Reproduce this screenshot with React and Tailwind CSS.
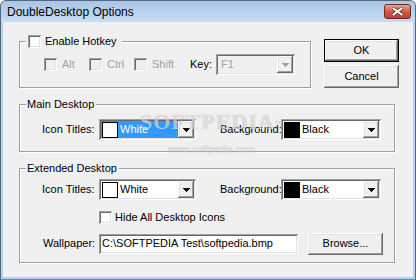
import React from "react";

const sunken =
  "shadow-[inset_1px_1px_0_#a0a0a0,inset_-1px_-1px_0_#fff,inset_2px_2px_0_#696969,inset_-2px_-2px_0_#e3e3e3]";
const raised =
  "shadow-[inset_-1px_-1px_0_#696969,inset_1px_1px_0_#fff,inset_-2px_-2px_0_#a0a0a0,inset_2px_2px_0_#e3e3e3]";

const Check = ({ disabled }) => (
  <span
    className={`block h-[13px] w-[13px] shrink-0 ${sunken} ${disabled ? "bg-[#f0f0f0]" : "bg-white"}`}
  />
);

const Arrow = ({ disabled }) => (
  <span className={`flex h-[17px] w-[16px] shrink-0 items-center justify-center bg-[#f0f0f0] ${raised}`}>
    <svg width="7" height="4" viewBox="0 0 7 4">
      <path
        d="M0 0h7v1H0zM1 1h5v1H1zM2 2h3v1H2zM3 3h1v1H3z"
        fill={disabled ? "#a0a0a0" : "#000"}
      />
    </svg>
  </span>
);

const Combo = ({ width, swatch, text, selected, disabled }) => (
  <div
    className={`flex h-[21px] shrink-0 items-center p-[2px] ${sunken} ${disabled ? "bg-[#f0f0f0]" : "bg-white"}`}
    style={{ width }}
  >
    <div
      className={`flex h-full flex-1 items-center pl-[1px] ${selected ? "bg-[#3399ff] text-white" : ""}`}
    >
      {swatch && (
        <span
          className={`h-[16px] w-[16px] shrink-0 border border-black ${swatch === "black" ? "bg-black" : "bg-white"}`}
        />
      )}
      <span className={`pl-[2px] ${disabled ? "text-[#a0a0a0]" : ""}`}>{text}</span>
    </div>
    <Arrow disabled={disabled} />
  </div>
);

const Group = ({ caption, className, children }) => (
  <div
    className={`relative border border-[#a0a0a0] shadow-[inset_1px_1px_0_#fff,1px_1px_0_#fff] ${className}`}
  >
    <div className="absolute left-[6px] top-[-7px] flex h-[13px] items-center bg-[#f0f0f0] pl-[1px] pr-[2px] leading-[13px]">
      {caption}
    </div>
    {children}
  </div>
);

const Button = ({ children, isDefault, className }) => (
  <div
    className={`flex w-[75px] items-center justify-center bg-[#f0f0f0] ${isDefault ? "border border-black" : ""} ${className}`}
  >
    <div className={`flex h-full w-full items-center justify-center ${raised}`}>{children}</div>
  </div>
);

export default function App() {
  return (
    <div className="flex h-[280px] w-[416px] flex-col overflow-hidden rounded-t-[6px] border border-[#52667e] border-b-[#2c9fd8] bg-[#b7cfea] font-['Liberation_Sans',sans-serif] text-[11px] text-black">
      <div className="flex h-[21px] shrink-0 items-center justify-between bg-gradient-to-b from-[#aac5e6] to-[#c9dcf1] pl-[6px] pr-[4px]">
        <span className="text-[12px] leading-none">DoubleDesktop Options</span>
        <div className="flex h-[15px] w-[27px] items-center justify-center rounded-[3px] border border-[#6b2b22] bg-gradient-to-b from-[#e6a597] via-[#cf5a47] to-[#c0402d]">
          <svg width="11" height="9" viewBox="0 0 11 9">
            <path d="M1.5 1.5l8 6M9.5 1.5l-8 6" stroke="#4a2420" strokeWidth="3.4" strokeLinecap="square" />
            <path d="M1.5 1.5l8 6M9.5 1.5l-8 6" stroke="#fff" strokeWidth="2" strokeLinecap="square" />
          </svg>
        </div>
      </div>

      <div className="relative mx-[2px] mb-[2px] flex-1 bg-[#f0f0f0] pl-[16px] pt-[17px]">
        <div className="flex items-start">
          <Group
            className="mt-[2px] h-[47px] w-[292px]"
            caption={
              <span className="flex items-center gap-[4px] pl-[1px] pr-[3px]">
                <Check />
                Enable Hotkey
              </span>
            }
          >
            <div className="mt-[12px] flex h-[21px] items-center pl-[24px]">
              <span className="flex w-[45px] items-center gap-[5px] text-[#a0a0a0]">
                <Check disabled />
                Alt
              </span>
              <span className="flex w-[45px] items-center gap-[5px] text-[#a0a0a0]">
                <Check disabled />
                Ctrl
              </span>
              <span className="flex w-[56px] items-center gap-[5px] text-[#a0a0a0]">
                <Check disabled />
                Shift
              </span>
              <span className="w-[26px]">Key:</span>
              <Combo width={79} text="F1" disabled />
            </div>
          </Group>

          <div className="ml-[13px] flex flex-col gap-[3px]">
            <Button isDefault className="h-[23px]">OK</Button>
            <Button className="h-[23px]">Cancel</Button>
          </div>
        </div>

        <Group caption="Main Desktop" className="mt-[16px] h-[48px] w-[376px]">
          <div className="mt-[14px] flex items-center pl-[22px]">
            <span className="w-[57px]">Icon Titles:</span>
            <Combo width={97} swatch="white" text="White" selected />
            <span className="ml-[24px] w-[61px]">Background:</span>
            <Combo width={100} swatch="black" text="Black" />
          </div>
        </Group>

        <Group caption="Extended Desktop" className="mt-[16px] h-[95px] w-[376px]">
          <div className="mt-[10px] flex items-center pl-[22px]">
            <span className="w-[57px]">Icon Titles:</span>
            <Combo width={97} swatch="white" text="White" />
            <span className="ml-[24px] w-[61px]">Background:</span>
            <Combo width={100} swatch="black" text="Black" />
          </div>
          <div className="mt-[9px] flex items-center gap-[3px] pl-[79px]">
            <Check />
            Hide All Desktop Icons
          </div>
          <div className="mt-[7px] flex h-[22px] items-center pl-[23px]">
            <span className="w-[56px]">Wallpaper:</span>
            <div className={`flex h-[20px] w-[199px] items-center bg-white pl-[3px] ${sunken}`}>
              C:\SOFTPEDIA Test\softpedia.bmp
            </div>
            <Button className="ml-[10px] h-[22px]">Browse...</Button>
          </div>
        </Group>

        <div className="pointer-events-none absolute left-[137px] top-[89px] flex flex-col items-center text-white/60 [text-shadow:0_0_1px_rgba(0,0,0,0.3)]">
          <span className="font-['Liberation_Serif',serif] text-[22px] font-bold leading-none tracking-[1px]">
            SOFTPEDIA<sup className="text-[7px]">™</sup>
          </span>
          <span className="mt-[12px] text-[10px] leading-none">www.softpedia.com</span>
        </div>
      </div>
    </div>
  );
}
